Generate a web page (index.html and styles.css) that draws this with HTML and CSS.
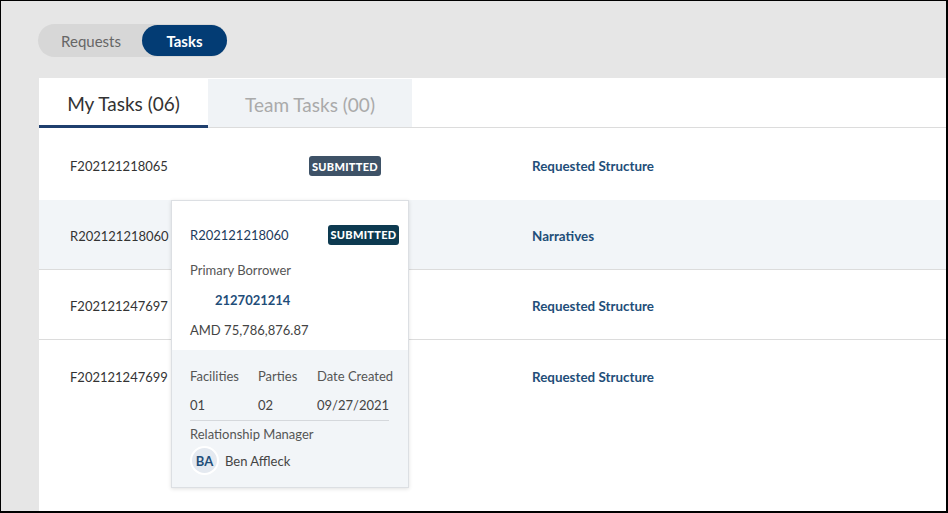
FILE: index.html
```html
<!DOCTYPE html>
<html>
<head>
<meta charset="utf-8">
<link rel="stylesheet" href="styles.css">
</head>
<body>
<div class="frame">
  <div class="toggle">
    <span class="toggle-item">Requests</span>
    <span class="toggle-item active">Tasks</span>
  </div>
  <div class="card">
    <div class="tabs">
      <div class="tab current">My Tasks (06)</div>
      <div class="tab other">Team Tasks (00)</div>
    </div>
    <div class="rows">
      <div class="row">
        <span class="id">F202121218065</span>
        <span class="badge-cell"><span class="badge slate">SUBMITTED</span></span>
        <span class="link">Requested Structure</span>
      </div>
      <div class="row hl">
        <span class="id">R202121218060</span>
        <span class="badge-cell"></span>
        <span class="link">Narratives</span>
      </div>
      <div class="row">
        <span class="id">F202121247697</span>
        <span class="badge-cell"></span>
        <span class="link">Requested Structure</span>
      </div>
      <div class="row last">
        <span class="id">F202121247699</span>
        <span class="badge-cell"></span>
        <span class="link">Requested Structure</span>
      </div>

      <div class="popover">
        <div class="pop-top">
          <div class="pop-head">
            <span class="pop-id">R202121218060</span>
            <span class="badge dark">SUBMITTED</span>
          </div>
          <div class="pop-line muted first">Primary Borrower</div>
          <div class="pop-line borrower">2127021214</div>
          <div class="pop-line amount">AMD 75,786,876.87</div>
        </div>
        <div class="pop-bottom">
          <div class="stats">
            <span class="lbl">Facilities</span>
            <span class="lbl">Parties</span>
            <span class="lbl">Date Created</span>
            <span class="val">01</span>
            <span class="val">02</span>
            <span class="val">09/27/2021</span>
          </div>
          <div class="rm-label">Relationship Manager</div>
          <div class="rm">
            <span class="avatar">BA</span>
            <span class="rm-name">Ben Affleck</span>
          </div>
        </div>
      </div>
    </div>
  </div>
</div>
</body>
</html>
```

FILE: styles.css
```css
* { box-sizing: border-box; }
html, body { margin: 0; padding: 0; }
body {
  font-family: "Lato", "Liberation Sans", sans-serif;
  font-size: 13px;
  color: #333;
}
.frame {
  width: 948px;
  height: 513px;
  background: #e6e6e6;
  border-top: 1px solid #000;
  border-left: 1px solid #000;
  border-right: 2px solid #000;
  border-bottom: 2px solid #000;
  display: flex;
  flex-direction: column;
  overflow: hidden;
}
.toggle {
  margin: 23px 0 0 37px;
  width: 189px;
  height: 33px;
  background: #d7d7d7;
  border-radius: 17px;
  display: flex;
  align-items: center;
  padding: 1px 0;
}
.toggle-item {
  height: 31px;
  display: flex;
  align-items: center;
  justify-content: center;
  font-size: 15px;
  color: #666;
  border-radius: 16px;
}
.toggle-item:first-child { width: 104px; padding-left: 2px; }
.toggle-item.active {
  width: 85px;
  background: #033c74;
  color: #fff;
  font-weight: 700;
}
.card {
  margin: 21px 0 0 38px;
  flex: 1;
  background: #fff;
  display: flex;
  flex-direction: column;
}
.tabs {
  display: flex;
  height: 50px;
  border-bottom: 1px solid #dcdcdc;
}
.tab {
  display: flex;
  align-items: center;
  justify-content: center;
  font-size: 19px;
  padding-top: 2px;
}
.tab.current {
  width: 169px;
  color: #333;
  border-bottom: 3px solid #1f3f6e;
  margin-bottom: -1px;
  padding-top: 3px;
}
.tab.other {
  width: 204px;
  background: #f0f3f6;
  color: #aaa;
  margin-top: 1px;
}
.rows {
  position: relative;
  padding-top: 2px;
}
.row {
  height: 70px;
  display: grid;
  grid-template-columns: 239px 223px 1fr;
  align-items: center;
  padding: 3px 0 0 31px;
  border-bottom: 1px solid #dcdcdc;
}
.row:first-child { border-bottom-color: #fff; }
.row.hl { background: #f2f5f8; }
.row.last { border-bottom: none; }
.id { color: #333; }
.link { color: #1f4e79; font-weight: 700; font-size: 13.4px; }
.badge-cell { display: flex; }
.badge {
  display: inline-flex;
  align-items: center;
  justify-content: center;
  height: 20px;
  border-radius: 3px;
  font-size: 11px;
  font-weight: 900;
  color: #fff;
  letter-spacing: 0.3px;
}
.badge.slate { width: 72px; background: #3e5267; }
.badge.dark { width: 71px; background: #0d3a50; }
.popover {
  position: absolute;
  left: 132px;
  top: 72px;
  width: 238px;
  height: 288px;
  background: #fff;
  border: 1px solid #dcdfe3;
  box-shadow: 0 1px 4px rgba(0, 0, 0, 0.12);
  display: flex;
  flex-direction: column;
}
.pop-top {
  height: 149px;
  padding: 23px 9px 0 18px;
}
.pop-head {
  height: 21px;
  display: flex;
  align-items: center;
  justify-content: space-between;
}
.pop-id { color: #1d3a5c; }
.pop-line {
  height: 30px;
  line-height: 30px;
}
.pop-line.first { margin-top: 10px; }
.muted { color: #555; }
.borrower { color: #1f4e79; font-weight: 700; padding-left: 25px; }
.amount { color: #444; }
.pop-bottom {
  flex: 1;
  background: #f2f5f8;
  padding: 11px 12px 0 18px;
}
.stats {
  display: grid;
  grid-template-columns: 68px 59px 1fr;
  grid-template-rows: 29px 29px;
  align-items: center;
  border-bottom: 1px solid #d5d8dc;
  padding-bottom: 1px;
  margin-right: 7px;
  white-space: nowrap;
}
.lbl { color: #555; }
.val { color: #444; }
.rm-label {
  height: 24px;
  line-height: 24px;
  color: #555;
  margin-top: 1px;
}
.rm {
  display: flex;
  align-items: center;
  gap: 6px;
  margin-top: 0;
}
.avatar {
  width: 29px;
  height: 29px;
  border-radius: 50%;
  background: #e4e9f0;
  border: 2px solid #fff;
  display: flex;
  align-items: center;
  justify-content: center;
  color: #1f4e79;
  font-weight: 700;
  font-size: 13px;
}
.rm-name { color: #444; }
```
